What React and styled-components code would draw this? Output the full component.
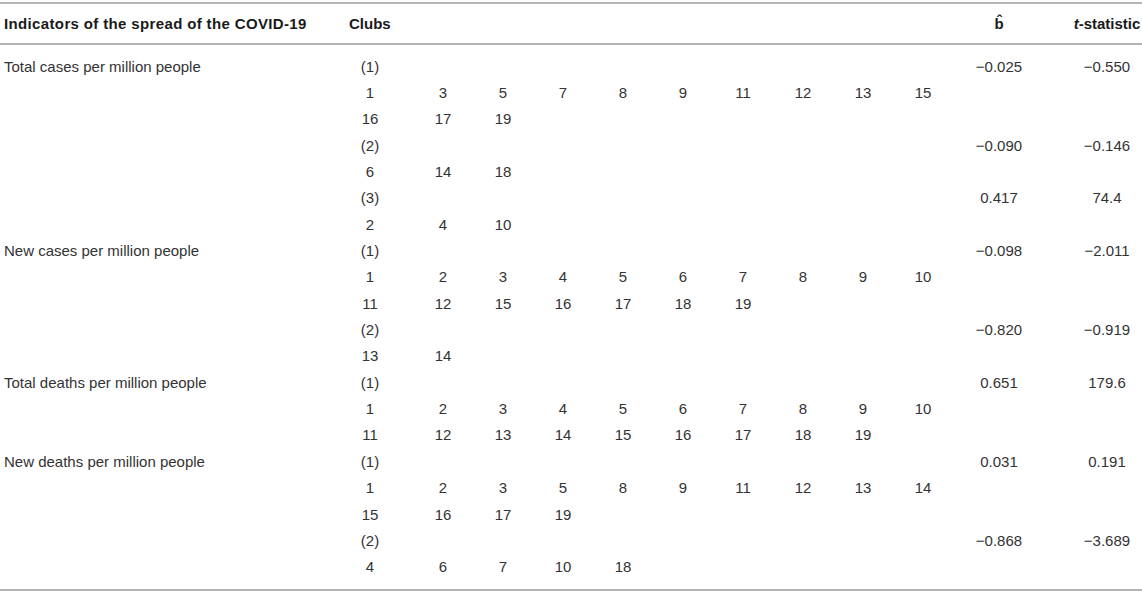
import React from "react";
import styled, { createGlobalStyle } from "styled-components";

const GlobalStyle = createGlobalStyle`
  html, body { margin: 0; padding: 0; background: #ffffff; }
  body { font-family: "Liberation Sans", Arial, Helvetica, sans-serif; }
`;

const COLS = "340px 73px repeat(9, 60px) 92px 97px";

const Page = styled.div`
  width: 1142px;
  padding-top: 2px;
`;

const Table = styled.div`
  border-top: 2px solid #b4b4b4;
  border-bottom: 2px solid #b4b4b4;
`;

const HeadRow = styled.div`
  display: grid;
  grid-template-columns: ${COLS};
  height: 39px;
  align-items: center;
  border-bottom: 2px solid #b4b4b4;
  font-size: 15px;
  font-weight: 700;
  color: #1a1a1a;
`;

const Body = styled.div`
  padding: 8px 0 9px;
`;

const Row = styled.div`
  display: grid;
  grid-template-columns: ${COLS};
  height: 26.35px;
  align-items: center;
  font-size: 15px;
  color: #333333;
  white-space: nowrap;
`;

const Label = styled.div`
  grid-column: 1;
  padding-left: 4px;
  letter-spacing: ${(p) => (p.$head ? "0.36px" : "0")};
`;

const ClubsHead = styled.div`
  grid-column: 2 / 12;
  padding-left: 9px;
`;

const Club = styled.div`
  grid-column: ${(p) => p.$col};
  text-align: center;
  padding-right: ${(p) => (p.$col === 2 ? "13px" : "0")};
`;

const Coef = styled.div`
  grid-column: 12;
  text-align: center;
`;

const Stat = styled.div`
  grid-column: 13;
  text-align: center;
  padding-left: 27px;
`;

const Ital = styled.i`
  font-style: italic;
`;

const data = [
  {
    label: "Total cases per million people",
    clubs: [
      { id: 1, b: "\u22120.025", t: "\u22120.550", rows: [[1, 3, 5, 7, 8, 9, 11, 12, 13, 15], [16, 17, 19]] },
      { id: 2, b: "\u22120.090", t: "\u22120.146", rows: [[6, 14, 18]] },
      { id: 3, b: "0.417", t: "74.4", rows: [[2, 4, 10]] },
    ],
  },
  {
    label: "New cases per million people",
    clubs: [
      { id: 1, b: "\u22120.098", t: "\u22122.011", rows: [[1, 2, 3, 4, 5, 6, 7, 8, 9, 10], [11, 12, 15, 16, 17, 18, 19]] },
      { id: 2, b: "\u22120.820", t: "\u22120.919", rows: [[13, 14]] },
    ],
  },
  {
    label: "Total deaths per million people",
    clubs: [
      { id: 1, b: "0.651", t: "179.6", rows: [[1, 2, 3, 4, 5, 6, 7, 8, 9, 10], [11, 12, 13, 14, 15, 16, 17, 18, 19]] },
    ],
  },
  {
    label: "New deaths per million people",
    clubs: [
      { id: 1, b: "0.031", t: "0.191", rows: [[1, 2, 3, 5, 8, 9, 11, 12, 13, 14], [15, 16, 17, 19]] },
      { id: 2, b: "\u22120.868", t: "\u22123.689", rows: [[4, 6, 7, 10, 18]] },
    ],
  },
];

export default function App() {
  const rows = [];
  data.forEach((g, gi) => {
    g.clubs.forEach((c, ci) => {
      rows.push(
        <Row key={`h-${gi}-${ci}`}>
          {ci === 0 && <Label>{g.label}</Label>}
          <Club $col={2}>({c.id})</Club>
          <Coef>{c.b}</Coef>
          <Stat>{c.t}</Stat>
        </Row>
      );
      c.rows.forEach((nums, ri) => {
        rows.push(
          <Row key={`n-${gi}-${ci}-${ri}`}>
            {nums.map((n, ni) => (
              <Club key={ni} $col={ni + 2}>
                {n}
              </Club>
            ))}
          </Row>
        );
      });
    });
  });

  return (
    <Page>
      <GlobalStyle />
      <Table>
        <HeadRow>
          <Label $head>Indicators of the spread of the COVID-19</Label>
          <ClubsHead>Clubs</ClubsHead>
          <Coef>b&#770;</Coef>
          <Stat>
            <Ital>t</Ital>-statistic
          </Stat>
        </HeadRow>
        <Body>{rows}</Body>
      </Table>
    </Page>
  );
}
